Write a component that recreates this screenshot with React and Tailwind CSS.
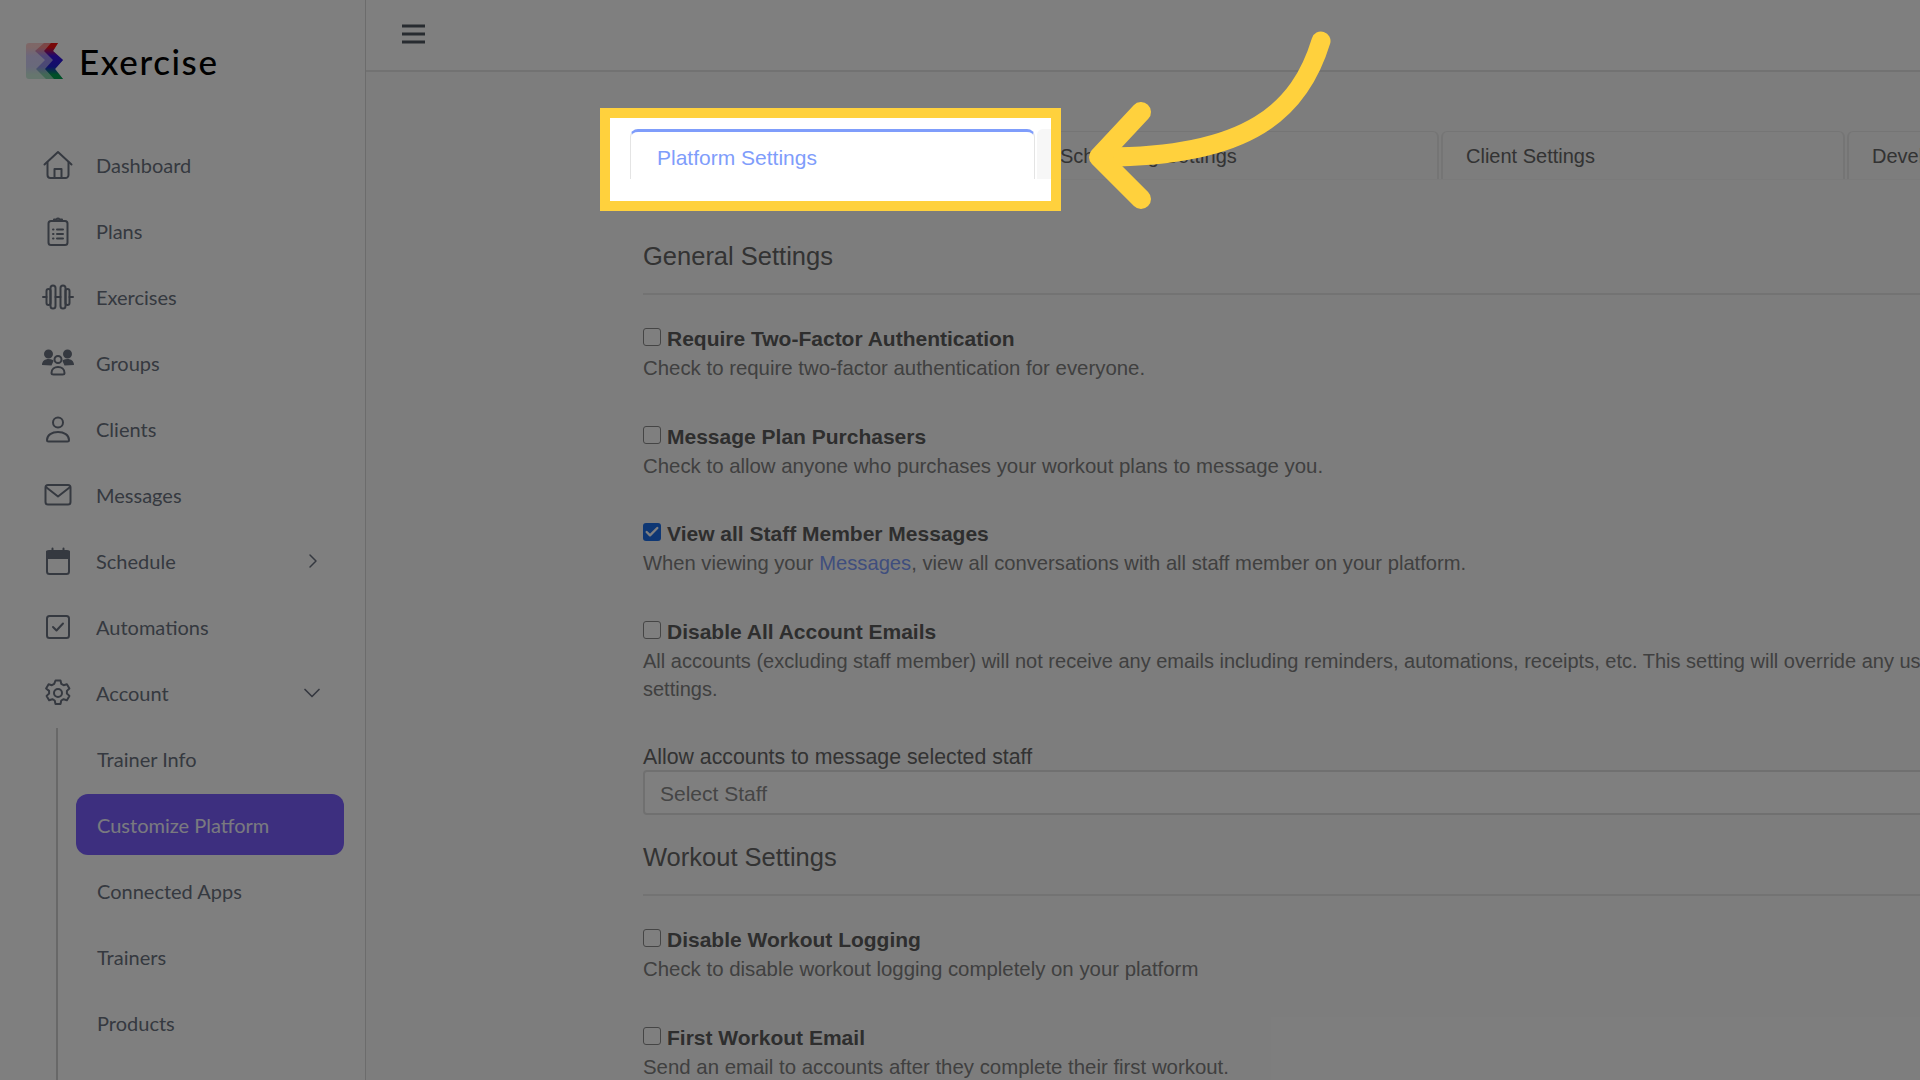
import { Check, ChevronDown, ChevronRight } from "lucide-react";

const sans = "font-['Liberation_Sans',Arial,sans-serif]";

const Icon = ({ children }) => (
  <svg
    viewBox="0 0 32 32"
    className="w-8 h-8 shrink-0"
    fill="none"
    stroke="currentColor"
    strokeWidth="2"
    strokeLinecap="round"
    strokeLinejoin="round"
  >
    {children}
  </svg>
);

const nav = [
  {
    label: "Dashboard",
    icon: (
      <>
        <path d="M2.5 15.5 16 3l13.5 12.5" />
        <path d="M5.5 13.5V26a3 3 0 0 0 3 3h15a3 3 0 0 0 3-3V13.5" />
        <path d="M12.5 29v-9h7v9" />
      </>
    ),
  },
  {
    label: "Plans",
    icon: (
      <>
        <rect x="6.5" y="6" width="19" height="24" rx="2.5" />
        <path d="M12 6V4.5h2.5a1.7 1.7 0 0 1 3 0H20V6" />
        <path d="M11 14.5h.5M15 14.5h6M11 19h.5M15 19h6M11 23.5h.5M15 23.5h6" />
      </>
    ),
  },
  {
    label: "Exercises",
    icon: (
      <>
        <rect x="4.5" y="8" width="4" height="16" rx="2" />
        <rect x="8.5" y="4.500" width="5" height="23" rx="2.500" />
        <rect x="18.500" y="4.500" width="5" height="23" rx="2.500" />
        <rect x="23.500" y="8" width="4" height="16" rx="2" />
        <path d="M13.500 16h5M1 16h3.500M27.500 16H31" />
      </>
    ),
  },
  {
    label: "Groups",
    icon: (
      <>
        <circle cx="6.500" cy="7" r="3.500" fill="currentColor" />
        <circle cx="25.500" cy="7" r="3.500" fill="currentColor" />
        <circle cx="16" cy="12.500" r="3.500" />
        <path d="M0 18c0-4 3-6 6.500-6s5 1 5 2l-2 4.500zM32 18c0-4-3-6-6.500-6s-5 1-5 2l2 4.500z" fill="currentColor" stroke="none" />
        <path d="M9.500 26c0-4 3-6 6.500-6s6.500 2 6.500 6c0 1-1 1.500-2 1.500h-9c-1 0-2-.5-2-1.500z" />
      </>
    ),
  },
  {
    label: "Clients",
    icon: (
      <>
        <circle cx="16" cy="9.500" r="5" />
        <path d="M5 27c0-5 5-8 11-8s11 3 11 8c0 1-.5 1.500-1.500 1.500h-19C5.500 28.500 5 28 5 27z" />
      </>
    ),
  },
  {
    label: "Messages",
    icon: (
      <>
        <rect x="3.500" y="6" width="25" height="19.500" rx="2.500" />
        <path d="m4.500 8.500 11.500 9 11.500-9" />
      </>
    ),
  },
  {
    label: "Schedule",
    chevron: "right",
    icon: (
      <>
        <rect x="5" y="6" width="22" height="23" rx="2.500" />
        <path d="M5 6.500h22V13H5z" fill="currentColor" />
        <path d="M10.500 3.500V7M21.500 3.500V7" />
      </>
    ),
  },
  {
    label: "Automations",
    icon: (
      <>
        <rect x="5" y="5" width="22" height="22" rx="2.500" />
        <path d="m11 16 3.500 3.500L21 12.500" />
      </>
    ),
  },
  {
    label: "Account",
    chevron: "down",
    icon: (
      <>
        <circle cx="16" cy="16" r="4" />
        <path d="M13.500 3.500h5l.8 3.400 2.300 1.300 3.300-1 2.500 4.300-2.500 2.400v2.600l2.500 2.400-2.500 4.300-3.300-1-2.300 1.300-.8 3.400h-5l-.8-3.400-2.300-1.300-3.300 1-2.500-4.300 2.500-2.400v-2.600L4.100 11.500l2.500-4.300 3.300 1 2.300-1.300z" />
      </>
    ),
  },
];

const subNav = ["Trainer Info", "Customize Platform", "Connected Apps", "Trainers", "Products"];

const generalRows = [
  {
    label: "Require Two-Factor Authentication",
    desc: "Check to require two-factor authentication for everyone.",
  },
  {
    label: "Message Plan Purchasers",
    desc: "Check to allow anyone who purchases your workout plans to message you.",
  },
  {
    label: "View all Staff Member Messages",
    checked: true,
    descSize: "text-[20.2px]",
    desc: (
      <>
        When viewing your <span className="text-[#7f9dfb]">Messages</span>, view all conversations with all staff
        member on your platform.
      </>
    ),
  },
  {
    label: "Disable All Account Emails",
    descSize: "text-[20px]",
    desc: (
      <>
        All accounts (excluding staff member) will not receive any emails including reminders, automations, receipts,
        etc. This setting will override any user's notification
        <br />
        settings.
      </>
    ),
  },
];

const workoutRows = [
  {
    label: "Disable Workout Logging",
    desc: "Check to disable workout logging completely on your platform",
  },
  {
    label: "First Workout Email",
    desc: "Send an email to accounts after they complete their first workout.",
  },
];

function Logo() {
  return (
    <svg viewBox="0 0 37 37" className="w-[37px] h-[37px] shrink-0">
      <defs>
        <linearGradient id="logoBands" x1="0" x2="0" y1="0" y2="1">
          <stop offset="0.12" stopColor="#f01010" />
          <stop offset="0.36" stopColor="#3a10e0" />
          <stop offset="0.66" stopColor="#2020d0" />
          <stop offset="0.88" stopColor="#00a050" />
        </linearGradient>
      </defs>
      <path d="M3 0h29l-5 8 10 9-8 9 8 10H3a3 3 0 0 1-3-3V3a3 3 0 0 1 3-3z" fill="url(#logoBands)" fillOpacity="0.2" />
      <path d="M18 0h14l-5 8 10 9-8 9 8 10H20l-10-10 9-9-10-9z" fill="url(#logoBands)" fillOpacity="0.35" />
      <path d="M25 0h7l-5 8 10 9-8 9 8 10h-9l-9-10 8-9-9-9z" fill="url(#logoBands)" />
    </svg>
  );
}

function Sidebar() {
  return (
    <aside className="w-[366px] h-full shrink-0 bg-white border-r border-[#d8d8d8] font-['Lato',sans-serif] text-[20px] text-[#6b7280]">
      <div className="h-[132px] pl-[26px] pt-[42px] flex items-start gap-[16px]">
        <div className="pt-[1px]">
          <Logo />
        </div>
        <span className="text-[35px] leading-[38px] tracking-[1.6px] font-medium text-black">Exercise</span>
      </div>
      <nav>
        {nav.map((n) => (
          <div key={n.label} className="h-[66px] pl-[42px] pr-[42px] flex items-center">
            <Icon>{n.icon}</Icon>
            <span className="ml-[22px] flex-1">{n.label}</span>
            {n.chevron === "right" && <ChevronRight className="w-6 h-6 mr-[-2px]" strokeWidth={1.5} />}
            {n.chevron === "down" && <ChevronDown className="w-7 h-7 mr-[-3px]" strokeWidth={1.5} />}
          </div>
        ))}
      </nav>
      <div className="ml-[56px] mt-[2px] pl-[18px] mr-[21px] pb-[60px] flex flex-col gap-[5px] border-l-2 border-[#d0d0d0]">
        {subNav.map((s) => (
          <div
            key={s}
            className={
              s === "Customize Platform"
                ? "h-[61px] pl-[21px] flex items-center rounded-[12px] bg-[#7a5fff] text-[#f4f4ff]"
                : "h-[61px] pl-[21px] flex items-center"
            }
          >
            {s}
          </div>
        ))}
      </div>
    </aside>
  );
}

function Tab({ label }) {
  return (
    <div className="w-[404px] h-[48px] shrink-0 pl-[23px] flex items-center rounded-t-[6px] border-x-2 border-t border-[#ebebeb] bg-[#fafafa] text-[#666]">
      {label}
    </div>
  );
}

function SettingRow({ row }) {
  return (
    <div className="mb-[41.6px]">
      <div className="h-[26px] mb-[2px] flex items-center">
        <span
          className={
            row.checked
              ? "w-[18px] h-[18px] rounded-[3px] flex items-center justify-center bg-[#1d6fe8] mt-[-4px]"
              : "w-[18px] h-[18px] rounded-[3px] border border-[#8a8a8a] bg-white mt-[-4px]"
          }
        >
          {row.checked && <Check className="w-4 h-4 text-white" strokeWidth={3.5} />}
        </span>
        <span className="ml-[6px] text-[21px] font-bold text-[#5c5c5c]">{row.label}</span>
      </div>
      <p className={`${row.descSize || "text-[20.4px]"} text-[#808080] whitespace-nowrap`}>{row.desc}</p>
    </div>
  );
}

function SectionTitle({ children }) {
  return (
    <div className="h-[36px] mb-[19px] flex items-center">
      <h2 className="text-[25.5px] text-[#666]">{children}</h2>
    </div>
  );
}

function Main() {
  return (
    <main className={`flex-1 min-w-0 h-full bg-[#fbfbfb] ${sans} text-[20px] leading-[28px]`}>
      <header className="h-[72px] bg-white border-b-2 border-[#e4e4e4] pl-[36px] flex items-center">
        <svg viewBox="0 0 23 20" className="w-[23px] h-[20px] mt-[-2px] text-[#4f5661]" fill="none" stroke="currentColor" strokeWidth="3">
          <path d="M0 2h23M0 10h23M0 18h23" />
        </svg>
      </header>
      <div className="pl-[263px] pt-[59px] w-[1600px]">
        <div className="flex gap-[2px] border-b border-[#f4f4f4]">
          <Tab label="Platform Settings" />
          <Tab label="Scheduling Settings" />
          <Tab label="Client Settings" />
          <Tab label="Developer Settings" />
        </div>
        <div className="pl-[14px] pt-[58px]">
          <SectionTitle>General Settings</SectionTitle>
          <div className="h-[2px] bg-[#e6e6e6] mb-[31px]" />
          {generalRows.map((r) => (
            <SettingRow key={r.label} row={r} />
          ))}
          <div className="mt-[-1px] h-[28px] text-[21.3px] text-[#666]">Allow accounts to message selected staff</div>
          <div className="mt-[-1px] h-[45px] pl-[15px] pt-[3px] flex items-center rounded-[4px] border-2 border-[#e0e0e0] bg-white text-[21px] text-[#8a8a8a]">
            Select Staff
          </div>
          <div className="mt-[24px]">
            <SectionTitle>Workout Settings</SectionTitle>
          </div>
          <div className="h-[2px] bg-[#e6e6e6] mb-[31px]" />
          {workoutRows.map((r) => (
            <SettingRow key={r.label} row={r} />
          ))}
        </div>
      </div>
    </main>
  );
}

export default function App() {
  return (
    <div className="relative w-screen h-screen overflow-hidden flex">
      <Sidebar />
      <Main />

      {/* dim layer, the tour highlight sits on top of it */}
      <div className="absolute inset-0 z-10 bg-black/50" />

      <div className={`absolute z-20 left-[600px] top-[108px] w-[461px] h-[103px] border-[10px] border-[#ffd13d] bg-white overflow-hidden ${sans} text-[21px]`}>
        <div className="absolute left-[20px] top-[11px] w-[405px] h-[50px] pl-[26px] pt-[5px] flex items-center rounded-t-[8px] border-x border-[#e4e4e4] border-t-[3px] border-t-[#7f9dfb] text-[#7f9dfb]">
          Platform Settings
        </div>
        <div className="absolute left-[427px] top-[11px] w-[20px] h-[50px] rounded-tl-[6px] bg-[#f7f7f7]" />
      </div>

      <svg
        className="absolute z-30 inset-0 w-full h-full pointer-events-none"
        viewBox="0 0 1920 1080"
        fill="none"
        stroke="#ffd13d"
        strokeWidth="19"
        strokeLinecap="round"
        strokeLinejoin="round"
      >
        <path d="M1321 41C1300 110 1250 157 1105 157" />
        <path d="M1141 112 1099 157 1141 199" strokeWidth="20" />
      </svg>
    </div>
  );
}
